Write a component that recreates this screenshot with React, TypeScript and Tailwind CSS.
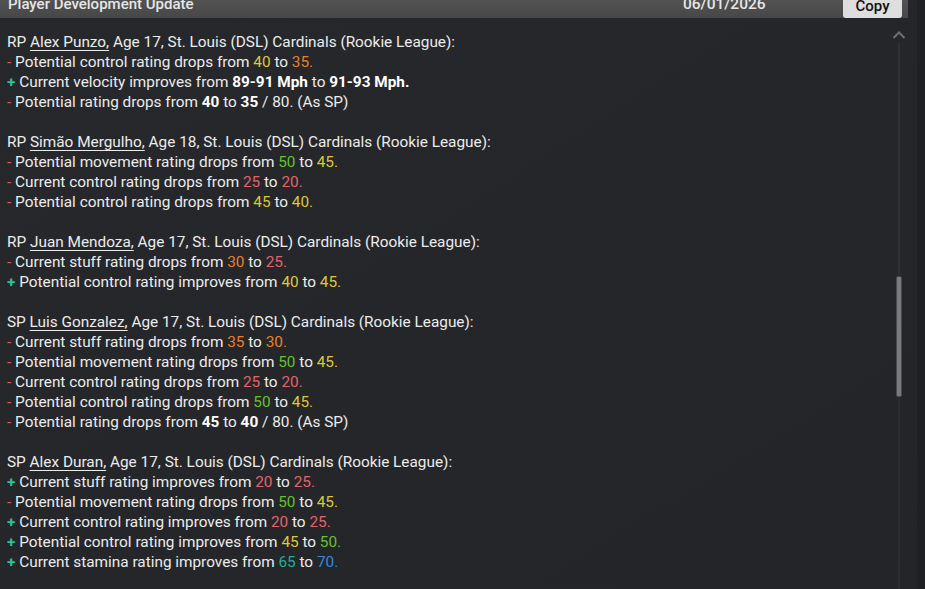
import React from "react";

type Seg = { t: string; c?: string; b?: boolean };

const Y = "text-[#dcc83c]";
const O = "text-[#e8802c]";
const G = "text-[#64c22e]";
const R = "text-[#e2636a]";
const T = "text-[#25ad92]";
const B = "text-[#3389d8]";

type Line = { sign: "+" | "-"; segs: Seg[] };
type Block = { pos: string; name: string; age: number; lines: Line[] };

const drop = (label: string, a: string, ac: string, b: string, bc: string): Line => ({
  sign: "-",
  segs: [
    { t: label + " drops from " },
    { t: a, c: ac },
    { t: " to " },
    { t: b + ".", c: bc },
  ],
});
const imp = (label: string, a: string, ac: string, b: string, bc: string): Line => ({
  sign: "+",
  segs: [
    { t: label + " improves from " },
    { t: a, c: ac },
    { t: " to " },
    { t: b + ".", c: bc },
  ],
});

const blocks: Block[] = [
  {
    pos: "RP",
    name: "Alex Punzo,",
    age: 17,
    lines: [
      drop("Potential control rating", "40", Y, "35", O),
      {
        sign: "+",
        segs: [
          { t: "Current velocity improves from " },
          { t: "89-91 Mph", b: true },
          { t: " to " },
          { t: "91-93 Mph.", b: true },
        ],
      },
      {
        sign: "-",
        segs: [
          { t: "Potential rating drops from " },
          { t: "40", b: true },
          { t: " to " },
          { t: "35", b: true },
          { t: " / 80. (As SP)" },
        ],
      },
    ],
  },
  {
    pos: "RP",
    name: "Simão Mergulho,",
    age: 18,
    lines: [
      drop("Potential movement rating", "50", G, "45", Y),
      drop("Current control rating", "25", R, "20", R),
      drop("Potential control rating", "45", Y, "40", Y),
    ],
  },
  {
    pos: "RP",
    name: "Juan Mendoza,",
    age: 17,
    lines: [
      drop("Current stuff rating", "30", O, "25", R),
      imp("Potential control rating", "40", Y, "45", Y),
    ],
  },
  {
    pos: "SP",
    name: "Luis Gonzalez,",
    age: 17,
    lines: [
      drop("Current stuff rating", "35", O, "30", O),
      drop("Potential movement rating", "50", G, "45", Y),
      drop("Current control rating", "25", R, "20", R),
      drop("Potential control rating", "50", G, "45", Y),
      {
        sign: "-",
        segs: [
          { t: "Potential rating drops from " },
          { t: "45", b: true },
          { t: " to " },
          { t: "40", b: true },
          { t: " / 80. (As SP)" },
        ],
      },
    ],
  },
  {
    pos: "SP",
    name: "Alex Duran,",
    age: 17,
    lines: [
      imp("Current stuff rating", "20", R, "25", R),
      drop("Potential movement rating", "50", G, "45", Y),
      imp("Current control rating", "20", R, "25", R),
      imp("Potential control rating", "45", Y, "50", G),
      imp("Current stamina rating", "65", T, "70", B),
    ],
  },
];

export default function App() {
  return (
    <div
      className="w-[925px] h-[589px] overflow-hidden flex bg-[#1f2023] text-[#ececec]"
      style={{ fontFamily: "Roboto, 'Noto Sans', sans-serif" }}
    >
      <div className="w-[917px] h-full flex flex-col bg-gradient-to-br from-[#27282c] via-[#25262a] to-[#242529]">
        {/* header */}
        <div className="h-[18px] mr-[9px] flex items-start bg-gradient-to-b from-[#525252] to-[#474747] overflow-hidden">
          <div className="pl-[8px] text-[15px] leading-[14px] -mt-[3px] text-[#e6e6e6] font-medium w-[683px]">
            Player Development Update
          </div>
          <div className="text-[15.5px] leading-[14px] -mt-[3px] text-[#e6e6e6] font-medium w-[150px]">
            06/01/2026
          </div>
          <div className="ml-auto mr-[6px] w-[59px] h-[18px] bg-[#dedede] rounded-b-[3px] text-[#111] text-[15px] font-medium leading-[14px] flex justify-center">
            <span className="-mt-[1px]">Copy</span>
          </div>
        </div>
        {/* body */}
        <div className="flex-1 flex min-h-0">
          <div className="flex-1 pl-[7px] pt-[14px] text-[15.35px] leading-[20px]">
            {blocks.map((bl, i) => (
              <div key={i} className="mb-[20px]">
                <div>
                  {bl.pos}{" "}
                  <span className="underline underline-offset-[3px] decoration-1">{bl.name}</span>{" "}
                  Age {bl.age}, St. Louis (DSL) Cardinals (Rookie League):
                </div>
                {bl.lines.map((ln, j) => (
                  <div key={j}>
                    {ln.sign === "-" ? (
                      <span className="text-[#e0585c]">-</span>
                    ) : (
                      <span className="text-[#2ec09e] font-bold">+</span>
                    )}{" "}
                    {ln.segs.map((s, k) => (
                      <span key={k} className={`${s.c ?? ""} ${s.b ? "font-bold text-white" : ""}`}>
                        {s.t}
                      </span>
                    ))}
                  </div>
                ))}
              </div>
            ))}
          </div>
          {/* scrollbar */}
          <div className="w-[26px] flex flex-col items-center pt-[12px] pr-[10px]">
            <svg width="14" height="9" viewBox="0 0 14 9" className="shrink-0">
              <path d="M1.5 8 L7 2.5 L12.5 8" fill="none" stroke="#6f6f72" strokeWidth="2" />
            </svg>
            <div className="flex-1 w-[6px] mt-[4px] flex flex-col items-center">
              <div className="w-[2px] h-[233px] bg-[#2f3034]" />
              <div className="w-[6px] h-[121px] shrink-0 rounded-[2px] bg-[#7b7b7e] border border-[#4a4a4d]" />
              <div className="w-[2px] flex-1 bg-[#2b2c30]" />
            </div>
          </div>
        </div>
      </div>
      <div className="flex-1 bg-[#1f2023]" />
    </div>
  );
}
